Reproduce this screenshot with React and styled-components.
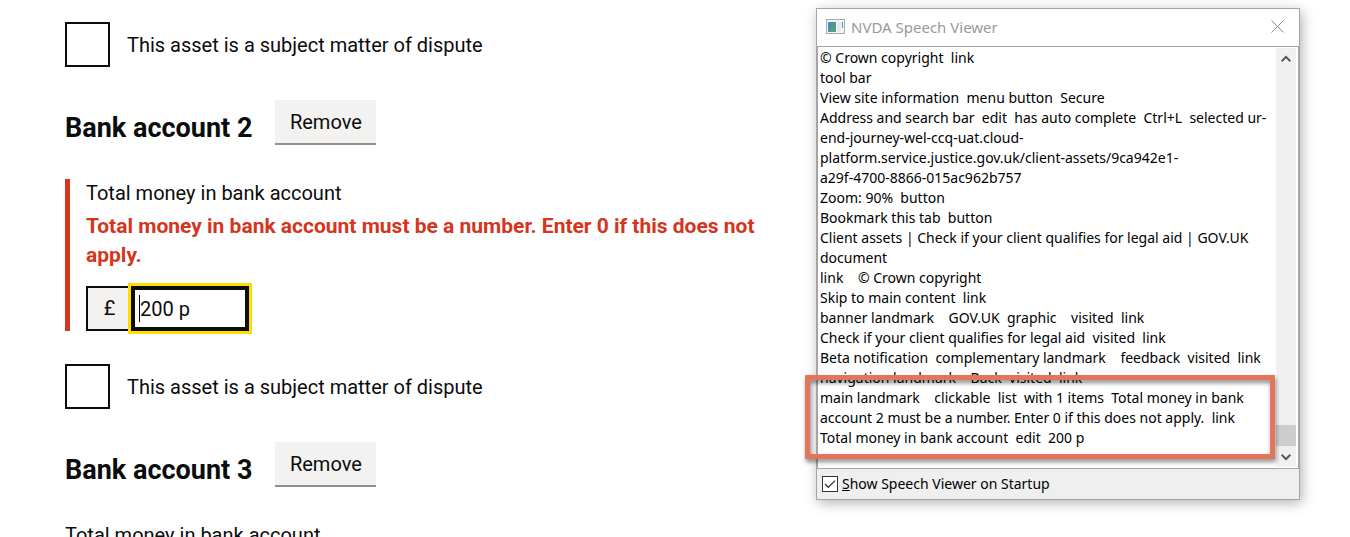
import React, { useState } from "react";
import styled, { createGlobalStyle } from "styled-components";

const GlobalStyle = createGlobalStyle`
  * {
    box-sizing: border-box;
  }
  body {
    margin: 0;
    background: #fff;
    color: #0b0c0c;
    font-family: Roboto, "Liberation Sans", sans-serif;
    font-size: 20px;
    line-height: 29px;
  }
`;

const Page = styled.div`
  display: flex;
  align-items: flex-start;
  justify-content: space-between;
  gap: 48px;
  height: 100vh;
  padding: 8px 50px 0 65px;
  overflow: hidden;
`;

const AssetForm = styled.form`
  display: flex;
  flex: 1;
  flex-direction: column;
  gap: 33px;
  max-width: 704px;
  padding-top: 14px;
`;

const CheckboxRow = styled.div`
  display: flex;
  align-items: center;
  gap: 17px;
`;

const CheckboxInput = styled.input`
  appearance: none;
  width: 45px;
  height: 45px;
  margin: 0;
  border: 2px solid #0b0c0c;
  background: ${(props) => (props.checked ? "#0b0c0c" : "#fff")};
`;

const CheckboxLabel = styled.label`
  padding-top: 2px;
`;

const AccountHeader = styled.div`
  display: flex;
  align-items: center;
  gap: 23px;
  height: 46px;
`;

const AccountTitle = styled.h2`
  margin: 0;
  padding-top: 9px;
  font-size: 27px;
  font-weight: 700;
  line-height: 30px;
`;

const RemoveButton = styled.button`
  align-self: flex-start;
  min-width: 101px;
  height: 43px;
  padding: 2px 14px 0;
  border: 0;
  background: #f3f2f1;
  box-shadow: 0 2px 0 #929191;
  color: #0b0c0c;
  cursor: pointer;
  font: inherit;
`;

const FormGroup = styled.div`
  padding-left: ${(props) => (props.$error ? "16px" : "0")};
  border-left: ${(props) => (props.$error ? "5px solid #d4351c" : "0")};
`;

const FieldLabel = styled.label`
  display: block;
`;

const ErrorMessage = styled.p`
  margin: 4px 0 16px;
  color: #d4351c;
  font-size: 21px;
  font-weight: 700;
`;

const MoneyField = styled.div`
  display: flex;
  position: relative;
`;

const Prefix = styled.div`
  display: flex;
  align-items: center;
  justify-content: center;
  width: 45px;
  height: 45px;
  border: 2px solid #0b0c0c;
  border-right: 0;
  background: #f3f2f1;
`;

const MoneyInput = styled.input`
  width: 118px;
  height: 45px;
  padding: 0 7px;
  border: 2px solid #0b0c0c;
  border-radius: 0;
  color: #0b0c0c;
  font: inherit;
  ${(props) =>
    props.$active &&
    `
    outline: 3px solid #fd0;
    box-shadow: inset 0 0 0 2px #0b0c0c;
  `}
`;

const Caret = styled.span`
  position: absolute;
  top: 9px;
  left: 53px;
  width: 1px;
  height: 27px;
  background: #000;
`;

const Viewer = styled.aside`
  flex: none;
  width: 484px;
  border: 1px solid #a5a5a9;
  background: #efefef;
  box-shadow: 2px 3px 12px rgba(0, 0, 0, 0.3);
  color: #000;
  font-family: "Noto Sans", "Open Sans", sans-serif;
  font-size: 14px;
  line-height: 20px;
`;

const TitleBar = styled.header`
  display: flex;
  align-items: center;
  gap: 6px;
  height: 37px;
  padding: 0 15px 2px 9px;
  background: #fff;
  color: #999;
  font-size: 15px;
`;

const ViewerTitle = styled.span`
  flex: 1;
`;

const CloseButton = styled.button`
  display: flex;
  padding: 0;
  border: 0;
  background: none;
`;

const LogPane = styled.div`
  display: flex;
  height: 423px;
  padding: 1px 2px 1px 2px;
  border: 1px solid #a5a5a9;
  background: #fff;
`;

const LogText = styled.div`
  flex: 1;
  white-space: pre;
`;

const LogLine = styled.p`
  margin: 0;
`;

const CalloutLines = styled.div`
  position: relative;
`;

const Callout = styled.div`
  position: absolute;
  top: -13px;
  right: 1px;
  bottom: -11px;
  left: -15px;
  border: 5px solid #e2755a;
  filter: drop-shadow(1px 3px 2px rgba(0, 0, 0, 0.45));
  pointer-events: none;
`;

const ScrollTrack = styled.div`
  display: flex;
  flex-direction: column;
  width: 20px;
  background: #f0f0f0;
`;

const ScrollButton = styled.button`
  display: flex;
  align-items: center;
  justify-content: center;
  height: 21px;
  padding: 0;
  border: 0;
  background: none;
`;

const ScrollThumb = styled.div`
  height: 21px;
  margin-top: auto;
  background: #cdcdcd;
`;

const ViewerFooter = styled.footer`
  display: flex;
  align-items: center;
  gap: 4px;
  height: 30px;
  padding-left: 5px;
`;

const StartupBox = styled.span`
  display: grid;
  width: 16px;
  height: 16px;

  > * {
    grid-area: 1 / 1;
  }
`;

const StartupInput = styled.input`
  appearance: none;
  width: 16px;
  height: 16px;
  margin: 0;
  border: 1px solid #333;
  background: #fff;
`;

const StartupTick = styled.svg`
  pointer-events: none;
  visibility: ${(props) => (props.$visible ? "visible" : "hidden")};
`;

const speechLog = [
  "© Crown copyright  link",
  "tool bar",
  "View site information  menu button  Secure",
  "Address and search bar  edit  has auto complete  Ctrl+L  selected ur-",
  "end-journey-wel-ccq-uat.cloud-",
  "platform.service.justice.gov.uk/client-assets/9ca942e1-",
  "a29f-4700-8866-015ac962b757",
  "Zoom: 90%  button",
  "Bookmark this tab  button",
  "Client assets | Check if your client qualifies for legal aid | GOV.UK",
  "document",
  "link    © Crown copyright",
  "Skip to main content  link",
  "banner landmark    GOV.UK  graphic    visited  link",
  "Check if your client qualifies for legal aid  visited  link",
  "Beta notification  complementary landmark    feedback  visited  link",
  "navigation landmark    Back  visited  link",
];

const latestSpeech = [
  "main landmark    clickable  list  with 1 items  Total money in bank",
  "account 2 must be a number. Enter 0 if this does not apply.  link",
  "Total money in bank account  edit  200 p",
];

const DisputeCheckbox = ({ id }) => {
  const [checked, setChecked] = useState(false);

  return (
    <CheckboxRow>
      <CheckboxInput
        id={id}
        type="checkbox"
        checked={checked}
        onChange={(event) => setChecked(event.target.checked)}
      />
      <CheckboxLabel htmlFor={id}>
        This asset is a subject matter of dispute
      </CheckboxLabel>
    </CheckboxRow>
  );
};

const AccountHeading = ({ number }) => (
  <AccountHeader>
    <AccountTitle>Bank account {number}</AccountTitle>
    <RemoveButton type="button">Remove</RemoveButton>
  </AccountHeader>
);

const MoneyGroup = ({ id, initialValue, error }) => {
  const [amount, setAmount] = useState(initialValue);

  return (
    <FormGroup $error={Boolean(error)}>
      <FieldLabel htmlFor={id}>Total money in bank account</FieldLabel>
      {error && <ErrorMessage id={`${id}-error`}>{error}</ErrorMessage>}
      <MoneyField>
        <Prefix aria-hidden="true">£</Prefix>
        <MoneyInput
          id={id}
          type="text"
          value={amount}
          $active={Boolean(error)}
          onChange={(event) => setAmount(event.target.value)}
        />
        {error && <Caret />}
      </MoneyField>
    </FormGroup>
  );
};

const SpeechViewer = () => {
  const [showOnStartup, setShowOnStartup] = useState(true);

  return (
    <Viewer>
      <TitleBar>
        <svg width="19" height="15" viewBox="0 0 19 15">
          <defs>
            <linearGradient id="app-icon" x1="0" y1="0" x2="1" y2="1">
              <stop offset="0" stopColor="#4b86b0" />
              <stop offset="1" stopColor="#55a878" />
            </linearGradient>
          </defs>
          <rect x="0.5" y="0.5" width="18" height="14" fill="#f4f5f6" stroke="#a7abb0" />
          <rect x="2" y="3" width="8" height="10" fill="url(#app-icon)" />
          <rect x="11" y="3" width="4" height="10" fill="#e6e8ea" />
          <rect x="16" y="3" width="1" height="6" fill="#5a93b5" />
        </svg>
        <ViewerTitle>NVDA Speech Viewer</ViewerTitle>
        <CloseButton type="button" aria-label="Close">
          <svg width="13" height="13" viewBox="0 0 13 13" stroke="#8a8a8a">
            <path d="M0.5 0.5 L12.5 12.5 M12.5 0.5 L0.5 12.5" />
          </svg>
        </CloseButton>
      </TitleBar>
      <LogPane>
        <LogText role="log">
          {speechLog.map((line) => (
            <LogLine key={line}>{line}</LogLine>
          ))}
          <CalloutLines>
            {latestSpeech.map((line) => (
              <LogLine key={line}>{line}</LogLine>
            ))}
            <Callout />
          </CalloutLines>
        </LogText>
        <ScrollTrack>
          <ScrollButton type="button" aria-label="Scroll up">
            <svg width="10" height="8" viewBox="0 0 10 8" fill="none" stroke="#555" strokeWidth="2">
              <path d="M0.7 6.2 L5 1.9 L9.3 6.2" />
            </svg>
          </ScrollButton>
          <ScrollThumb />
          <ScrollButton type="button" aria-label="Scroll down">
            <svg width="10" height="8" viewBox="0 0 10 8" fill="none" stroke="#555" strokeWidth="2">
              <path d="M0.7 1.8 L5 6.1 L9.3 1.8" />
            </svg>
          </ScrollButton>
        </ScrollTrack>
      </LogPane>
      <ViewerFooter>
        <StartupBox>
          <StartupInput
            id="show-on-startup"
            type="checkbox"
            checked={showOnStartup}
            onChange={(event) => setShowOnStartup(event.target.checked)}
          />
          <StartupTick
            $visible={showOnStartup}
            width="16"
            height="16"
            viewBox="0 0 16 16"
            fill="none"
            stroke="#333"
            strokeWidth="1.3"
          >
            <path d="M3 8 L6.3 11.3 L13 4.6" />
          </StartupTick>
        </StartupBox>
        <label htmlFor="show-on-startup">
          <u>S</u>how Speech Viewer on Startup
        </label>
      </ViewerFooter>
    </Viewer>
  );
};

const App = () => {
  return (
    <>
      <GlobalStyle />
      <Page>
        <AssetForm>
          <DisputeCheckbox id="dispute-1" />
          <AccountHeading number={2} />
          <MoneyGroup
            id="money-2"
            initialValue="200 p"
            error="Total money in bank account must be a number. Enter 0 if this does not apply."
          />
          <DisputeCheckbox id="dispute-2" />
          <AccountHeading number={3} />
          <MoneyGroup id="money-3" initialValue="" />
        </AssetForm>
        <SpeechViewer />
      </Page>
    </>
  );
};

export default App;
